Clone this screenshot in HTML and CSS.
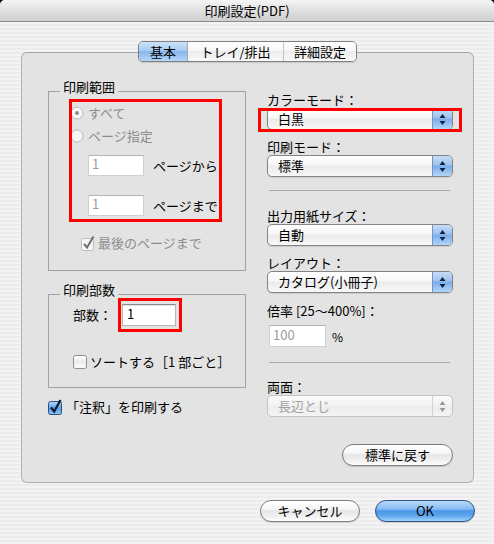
FILE: index.html
```html
<!DOCTYPE html>
<html lang="ja">
<head>
<meta charset="utf-8">
<title>印刷設定(PDF)</title>
<link rel="stylesheet" href="styles.css">
</head>
<body>
<div class="window">
  <div class="titlebar">印刷設定(PDF)</div>
  <div class="content">
    <div class="tabs">
      <div class="tabbar">
        <div class="tab tab-basic selected">基本</div>
        <div class="tab tab-tray">トレイ/排出</div>
        <div class="tab tab-detail">詳細設定</div>
      </div>
    </div>
    <div class="panel">
      <div class="col-left">
        <div class="group group-range">
          <div class="legend">印刷範囲</div>
          <div class="row row-all">
            <svg class="radio" width="14" height="14" viewBox="0 0 14 14"><circle cx="7" cy="7" r="6" fill="#f7f7f7" stroke="#b9b9b9"/><circle cx="7" cy="7" r="2" fill="#8f8f8f"/></svg>
            <span class="dim">すべて</span>
          </div>
          <div class="row row-pages">
            <svg class="radio" width="14" height="14" viewBox="0 0 14 14"><circle cx="7" cy="7" r="6" fill="#f7f7f7" stroke="#b9b9b9"/></svg>
            <span class="dim">ページ指定</span>
          </div>
          <div class="row field-row row-from">
            <span class="field field-page disabled">1</span>
            <span class="field-label">ページから</span>
          </div>
          <div class="row field-row row-to">
            <span class="field field-page disabled">1</span>
            <span class="field-label">ページまで</span>
          </div>
          <div class="row row-last">
            <svg class="check" width="16" height="16" viewBox="0 0 16 16"><rect x="1.5" y="3.5" width="12" height="12" rx="2" fill="#f6f6f6" stroke="#bdbdbd"/><path d="M4 9 L7 12.5 L13.5 1.5" fill="none" stroke="#6f6f6f" stroke-width="2"/></svg>
            <span class="dim">最後のページまで</span>
          </div>
        </div>
        <div class="group group-copies">
          <div class="legend">印刷部数</div>
          <div class="row row-copies">
            <span class="copies-label">部数：</span>
            <span class="field field-copies">1</span>
          </div>
          <div class="row row-sort">
            <svg class="check" width="16" height="16" viewBox="0 0 16 16"><defs><linearGradient id="gw" x1="0" y1="0" x2="0" y2="1"><stop offset="0" stop-color="#ffffff"/><stop offset="0.5" stop-color="#ececec"/><stop offset="1" stop-color="#fafafa"/></linearGradient></defs><rect x="1.5" y="1.5" width="13" height="13" rx="2" fill="url(#gw)" stroke="#8d8d8d"/></svg>
            <span class="sort-label">ソートする［1 部ごと］</span>
          </div>
        </div>
        <div class="row row-annot">
          <svg class="check" width="16" height="16" viewBox="0 0 16 16"><defs><linearGradient id="gb" x1="0" y1="0" x2="0" y2="1"><stop offset="0" stop-color="#b9d9f8"/><stop offset="0.5" stop-color="#5c9fe6"/><stop offset="1" stop-color="#8cc4f6"/></linearGradient></defs><rect x="1.5" y="2.5" width="13" height="13" rx="2" fill="url(#gb)" stroke="#2f4f80"/><path d="M4 8.5 L7.2 12.5 L13.5 1" fill="none" stroke="#111a33" stroke-width="2.2"/></svg>
          <span class="annot-label">「注釈」を印刷する</span>
        </div>
      </div>

      <div class="col-right">
        <div class="label label-color">カラーモード：</div>
        <div class="popup">
          <span class="popup-text">白黒</span>
          <span class="popup-arrows"><svg width="19" height="20" viewBox="0 0 19 20"><path d="M9.5 5 L12.5 9 L6.5 9 Z M6.5 12 L12.5 12 L9.5 16 Z" fill="#142040"/></svg></span>
        </div>
        <div class="label label-mode">印刷モード：</div>
        <div class="popup">
          <span class="popup-text">標準</span>
          <span class="popup-arrows"><svg width="19" height="20" viewBox="0 0 19 20"><path d="M9.5 5 L12.5 9 L6.5 9 Z M6.5 12 L12.5 12 L9.5 16 Z" fill="#142040"/></svg></span>
        </div>
        <div class="sep sep-1"></div>
        <div class="label label-paper">出力用紙サイズ：</div>
        <div class="popup">
          <span class="popup-text">自動</span>
          <span class="popup-arrows"><svg width="19" height="20" viewBox="0 0 19 20"><path d="M9.5 5 L12.5 9 L6.5 9 Z M6.5 12 L12.5 12 L9.5 16 Z" fill="#142040"/></svg></span>
        </div>
        <div class="label label-layout">レイアウト：</div>
        <div class="popup">
          <span class="popup-text">カタログ(小冊子)</span>
          <span class="popup-arrows"><svg width="19" height="20" viewBox="0 0 19 20"><path d="M9.5 5 L12.5 9 L6.5 9 Z M6.5 12 L12.5 12 L9.5 16 Z" fill="#142040"/></svg></span>
        </div>
        <div class="label label-scale">倍率 [25～400%]：</div>
        <div class="scale-row">
          <span class="field field-scale disabled">100</span>
          <span class="percent">%</span>
        </div>
        <div class="sep sep-2"></div>
        <div class="label label-duplex">両面：</div>
        <div class="popup disabled">
          <span class="popup-text">長辺とじ</span>
          <span class="popup-arrows"><svg width="19" height="20" viewBox="0 0 19 20"><path d="M9.5 5 L12.5 9 L6.5 9 Z M6.5 12 L12.5 12 L9.5 16 Z" fill="#9a9a9a"/></svg></span>
        </div>
        <div class="btn btn-reset">標準に戻す</div>
      </div>

      <div class="mark mark-range"></div>
      <div class="mark mark-copies"></div>
      <div class="mark mark-color"></div>
    </div>
    <div class="buttons">
      <div class="btn btn-cancel">キャンセル</div>
      <div class="btn btn-ok">OK</div>
    </div>
  </div>
</div>
</body>
</html>
```

FILE: styles.css
```css
* { box-sizing: border-box; }
html, body { margin: 0; padding: 0; }
body {
  width: 494px;
  height: 544px;
  background: #000;
  font-family: "Noto Sans CJK JP", "DejaVu Sans", sans-serif;
  font-size: 13px;
  color: #000;
  overflow: hidden;
}
.window {
  width: 494px;
  height: 544px;
  border-radius: 5px 5px 0 0;
  overflow: hidden;
  background: repeating-linear-gradient(to bottom, #ececec 0, #ececec 2px, #f3f3f3 2px, #f3f3f3 4px);
}
.titlebar {
  height: 22px;
  line-height: 21px;
  text-align: center;
  background: linear-gradient(#f5f5f5, #dedede 55%, #cfcfcf);
  border-bottom: 1px solid #8c8c8c;
}
.content { padding-top: 19px; }

/* tabs */
.tabs {
  display: flex;
  justify-content: center;
  height: 21px;
  position: relative;
  z-index: 2;
}
.tabbar {
  display: flex;
  height: 21px;
  border: 1px solid #7f7f7f;
  border-radius: 5px;
  overflow: hidden;
  margin-left: 1px;
  box-shadow: 0 1px 1px rgba(0,0,0,0.12);
}
.tab {
  height: 19px;
  line-height: 19px;
  text-align: center;
  background: linear-gradient(#ffffff, #f6f6f6 45%, #ececec 50%, #f9f9f9);
}
.tab-basic { width: 48px; }
.tab-tray { width: 96px; border-left: 1px solid #a9a9a9; }
.tab-detail { width: 73px; border-left: 1px solid #c4c4c4; }
.tab.selected {
  background: linear-gradient(#cde2f8, #a9cbf2 45%, #86b7ee 50%, #b4d6f8);
  color: #000;
}

/* panel */
.panel {
  position: relative;
  margin: -10px 20px 0 21px;
  height: 431px;
  background: #e3e3e3;
  border: 1px solid #b0b0b0;
  border-top-color: #a4a4a4;
  border-radius: 6px;
  display: flex;
  gap: 21px;
  padding-left: 26px;
}
.col-left { width: 198px; display: flex; flex-direction: column; }
.col-right { width: 186px; display: flex; flex-direction: column; }

.group {
  position: relative;
  border: 1px solid #a2a2a2;
  display: flex;
  flex-direction: column;
}
.group-range { margin-top: 38px; height: 180px; }
.group-copies { margin-top: 23px; height: 94px; }
.legend {
  position: absolute;
  top: -12px;
  left: 11px;
  padding: 0 3px;
  line-height: 14px;
  background: #e3e3e3;
}

.row { display: flex; align-items: center; height: 16px; line-height: 16px; }
.dim { color: #8e8e8e; }

.row-all { margin-top: 13px; padding-left: 21px; gap: 4px; }
.row-pages { margin-top: 7px; padding-left: 21px; gap: 4px; }
.field-row { height: 21px; padding-left: 39px; }
.row-from { margin-top: 11px; }
.row-to { margin-top: 19px; }
.field-label { margin-left: 9px; margin-top: 1px; }
.row-last { margin-top: 19px; padding-left: 31px; gap: 2px; }

.field {
  display: block;
  background: #fff;
  border: 1px solid #b6b6b6;
  border-top-color: #8a8a8a;
  box-shadow: inset 0 1px 1px rgba(0,0,0,0.12);
  padding-left: 3px;
  line-height: 15px;
  height: 21px;
}
.field.disabled {
  color: #9c9c9c;
  border-color: #d0d0d0;
  border-top-color: #b4b4b4;
  box-shadow: none;
}
.field-page { width: 56px; }

.row-copies { margin-top: 9px; height: 22px; padding-left: 24px; }
.copies-label { width: 39px; }
.field-copies { width: 54px; height: 22px; margin-left: 10px; line-height: 18px; padding-left: 4px; }
.row-sort { margin-top: 28px; padding-left: 23px; gap: 2px; }

.row-annot { margin-top: 11px; padding-left: 0; margin-left: -1px; gap: 3px; }

/* right column */
.label { height: 14px; line-height: 14px; margin-bottom: 1px; white-space: nowrap; }
.label-color { margin-top: 40px; }
.label-mode { margin-top: 10px; }
.label-paper { margin-top: 18px; }
.label-layout { margin-top: 10px; }
.label-scale { margin-top: 11px; margin-bottom: 7px; }
.label-duplex { margin-top: 17px; }

.popup {
  display: flex;
  align-items: stretch;
  height: 22px;
  border: 1px solid #848484;
  border-radius: 5px;
  overflow: hidden;
  background: linear-gradient(#ffffff, #f7f7f7 45%, #ebebeb 50%, #f8f8f8);
  box-shadow: 0 1px 1px rgba(0,0,0,0.1);
}
.popup-text { flex: 1; padding-left: 10px; line-height: 20px; white-space: nowrap; }
.popup-arrows {
  width: 20px;
  border-left: 1px solid #7394c8;
  background: linear-gradient(#c6dcf6, #9ec3ef 45%, #79aceb 50%, #b3d5f8);
}
.popup-arrows svg { display: block; }
.popup.disabled { border-color: #c2c2c2; box-shadow: none; background: linear-gradient(#fbfbfb, #f2f2f2 50%, #ececec 50%, #f5f5f5); }
.popup.disabled .popup-text { color: #a2a2a2; }
.popup.disabled .popup-arrows { background: transparent; border-left-color: #d4d4d4; }

.sep { height: 1px; background: #a8a8a8; width: 181px; margin-left: 2px; }
.sep-1 { margin-top: 13px; }
.sep-2 { margin-top: 15px; }

.scale-row { display: flex; align-items: center; height: 22px; padding-left: 2px; }
.field-scale { width: 57px; height: 22px; line-height: 18px; padding-left: 3px; }
.percent { margin-left: 6px; font-size: 12px; }

/* buttons */
.btn {
  height: 22px;
  line-height: 20px;
  text-align: center;
  border-radius: 11px;
  border: 1px solid #7e7e7e;
  background: linear-gradient(#ffffff, #f6f6f6 40%, #e6e6e6 50%, #f2f2f2 80%, #ffffff);
  box-shadow: 0 1px 1px rgba(0,0,0,0.15);
}
.btn-reset { width: 111px; align-self: flex-end; margin-top: 27px; }
.buttons {
  display: flex;
  justify-content: flex-end;
  gap: 15px;
  margin-top: 17px;
  padding-right: 19px;
}
.btn-cancel { width: 100px; }
.btn-ok {
  width: 100px;
  border-color: #2c4f88;
  background: linear-gradient(#b9dafa, #86bcf2 40%, #4a95e6 50%, #5fa8ef 75%, #9fd2fb);
}

/* red annotation marks */
.mark { position: absolute; border: 3px solid #ff0000; }
.mark-range { left: 47px; top: 46px; width: 153px; height: 123px; }
.mark-copies { left: 96px; top: 245px; width: 64px; height: 34px; }
.mark-color { left: 236px; top: 55px; width: 204px; height: 24px; }
```
